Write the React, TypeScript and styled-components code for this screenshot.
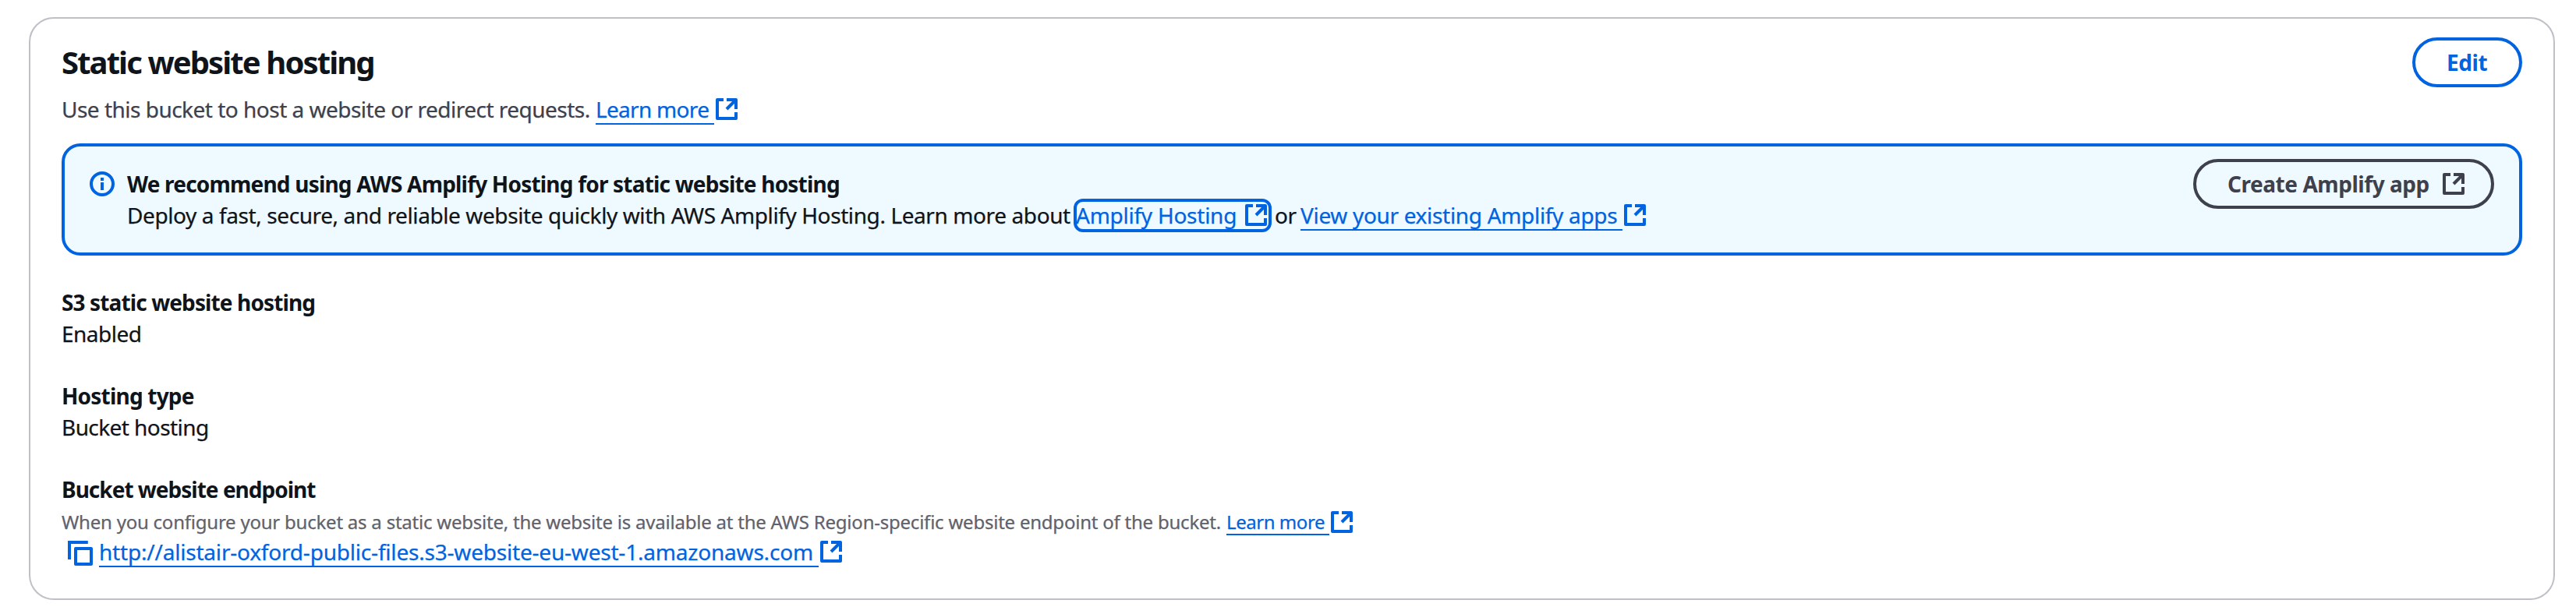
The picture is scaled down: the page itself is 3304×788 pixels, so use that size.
import React from 'react';
import styled, { createGlobalStyle } from 'styled-components';

const color = {
  text: '#0f141a',
  description: '#3e414c',
  hint: '#5f626c',
  action: '#0063e0',
  border: '#bfbfc7',
  infoSurface: '#eefaff',
};

const GlobalStyle = createGlobalStyle`
  *, *::before, *::after { box-sizing: border-box; }
  body {
    margin: 0;
    background: #fff;
    color: ${color.text};
    font-family: 'Noto Sans', 'Open Sans', sans-serif;
    font-size: 28px;
    line-height: 40px;
  }
`;

const Page = styled.main`
  height: 788px;
  padding: 22px 27px 18px 37px;
`;

const Card = styled.section`
  display: flex;
  flex-direction: column;
  height: 748px;
  padding: 24px 40px 0;
  border: 2px solid ${color.border};
  border-radius: 32px;
  background: #fff;
`;

const Header = styled.header`
  display: flex;
  flex: none;
  justify-content: space-between;
  align-items: flex-start;
  height: 136px;
`;

const HeaderText = styled.div`
  padding-top: 8px;
`;

const Title = styled.h2`
  margin: 0 0 16px;
  font-size: 40px;
  line-height: 48px;
  font-weight: 700;
  letter-spacing: -1.9px;
  white-space: nowrap;
`;

const Line = styled.div<{ $tracking?: number; $tone?: string }>`
  display: flex;
  height: 40px;
  white-space: pre;
  letter-spacing: ${(p) => p.$tracking ?? 0}px;
  color: ${(p) => p.$tone ?? color.text};
  -webkit-text-stroke: 0.25px currentColor;
`;

const Label = styled(Line)`
  font-weight: 700;
  -webkit-text-stroke: 0;
`;

const Hint = styled(Line)`
  padding-top: 4px;
  font-size: 24px;
  line-height: 36px;
  color: ${color.hint};
`;

const Run = styled.span<{ $width: number }>`
  flex: none;
  width: ${(p) => p.$width}px;
`;

const Anchor = styled.a<{ $focused?: boolean }>`
  display: flex;
  color: ${color.action};
  text-decoration: none;
  ${(p) =>
    p.$focused &&
    `
    height: 43px;
    margin: -1px 4px 0 4px;
    padding: 1px 4px 0 3px;
    border-radius: 12px;
    box-shadow: inset 0 0 0 4px ${color.action};
  `}
`;

const AnchorText = styled.span<{ $width: number; $tracking: number; $plain?: boolean; $offset?: number }>`
  flex: none;
  width: ${(p) => p.$width}px;
  letter-spacing: ${(p) => p.$tracking}px;
  height: ${(p) => p.$offset ?? 40}px;
  border-bottom: 2px solid ${(p) => (p.$plain ? 'transparent' : color.action)};
`;

const Icon = styled.svg<{ $lift?: number }>`
  flex: none;
  display: block;
  width: 32px;
  height: 32px;
  margin-top: ${(p) => p.$lift ?? 4}px;
  fill: none;
  stroke: currentColor;
  stroke-width: 2;
`;

const Button = styled.button<{ $tone: string; $end: number }>`
  display: flex;
  flex: none;
  align-items: center;
  gap: 16px;
  height: 64px;
  padding: 0 ${(p) => p.$end}px 0 40px;
  border: 4px solid ${(p) => p.$tone};
  border-radius: 40px;
  background: transparent;
  color: ${(p) => p.$tone};
  font: inherit;
  font-weight: 700;
  white-space: nowrap;
`;

const ButtonText = styled.span<{ $width: number; $tracking: number }>`
  width: ${(p) => p.$width}px;
  letter-spacing: ${(p) => p.$tracking}px;
  text-align: left;
`;

const Alert = styled.div`
  display: flex;
  flex: none;
  align-items: flex-start;
  height: 144px;
  padding: 16px 32px;
  border: 4px solid ${color.action};
  border-radius: 24px;
  background: ${color.infoSurface};
`;

const AlertIcon = styled.div`
  padding-top: 12px;
  margin-right: 16px;
  color: ${color.action};
`;

const AlertMessage = styled.div`
  flex: 1;
  padding-top: 12px;
`;

const Details = styled.div`
  display: flex;
  flex-direction: column;
  gap: 40px;
  padding-top: 40px;
`;

const CopyButton = styled.button`
  display: block;
  height: 40px;
  padding: 0 8px;
  border: 0;
  background: none;
  color: ${color.action};
`;

const External = ({ lift }: { lift?: number }) => (
  <Icon $lift={lift} viewBox="0 0 16 16" aria-hidden="true">
    <path d="M6 2H2V14H14V10" strokeLinejoin="round" />
    <path d="M8 2H14V8" strokeLinejoin="round" />
    <path d="M14 2L8 8" />
  </Icon>
);

type LinkProps = {
  children: string;
  width: number;
  tracking: number;
  focused?: boolean;
  lift?: number;
  underline?: number;
};

const ExternalLink = ({ children, width, tracking, focused, lift, underline }: LinkProps) => (
  <Anchor href="#" $focused={focused}>
    <AnchorText $width={width} $tracking={tracking} $plain={focused} $offset={underline}>
      {children}
    </AnchorText>
    <External lift={lift} />
  </Anchor>
);

export default function App() {
  return (
    <>
      <GlobalStyle />
      <Page>
        <Card>
          <Header>
            <HeaderText>
              <Title>Static website hosting</Title>
              <Line $tone={color.description} $tracking={-0.51}>
                <Run $width={685}>Use this bucket to host a website or redirect requests.</Run>
                <ExternalLink width={152} tracking={-0.7}>Learn more</ExternalLink>
              </Line>
            </HeaderText>
            <Button $tone={color.action} $end={40}>
              <ButtonText $width={53} $tracking={-0.4}>Edit</ButtonText>
            </Button>
          </Header>

          <Alert>
            <AlertIcon>
              <Icon $lift={4} viewBox="0 0 16 16" aria-hidden="true">
                <circle cx="8" cy="8" r="7" />
                <path d="M8 12V7M8 6V4" />
              </Icon>
            </AlertIcon>
            <AlertMessage>
              <Label $tracking={-0.8}>We recommend using AWS Amplify Hosting for static website hosting</Label>
              <Line $tracking={-0.4}>
                <Run $width={1210}>
                  Deploy a fast, secure, and reliable website quickly with AWS Amplify Hosting. Learn more about
                </Run>
                <ExternalLink width={215} tracking={-0.25} focused>Amplify Hosting</ExternalLink>
                <Run $width={33}>or</Run>
                <ExternalLink width={413} tracking={-0.32}>View your existing Amplify apps</ExternalLink>
              </Line>
            </AlertMessage>
            <Button $tone={color.description} $end={32}>
              <ButtonText $width={258} $tracking={-0.45}>Create Amplify app</ButtonText>
              <External lift={0} />
            </Button>
          </Alert>

          <Details>
            <div>
              <Label $tracking={-0.88}>S3 static website hosting</Label>
              <Line $tracking={-0.5}>Enabled</Line>
            </div>
            <div>
              <Label $tracking={-0.8}>Hosting type</Label>
              <Line $tracking={-0.57}>Bucket hosting</Line>
            </div>
            <div>
              <Label $tracking={-0.99}>Bucket website endpoint</Label>
              <Hint $tracking={-0.225}>
                <Run $width={1494}>
                  When you configure your bucket as a static website, the website is available at the AWS Region-specific website endpoint of the bucket.
                </Run>
                <ExternalLink width={132} tracking={-0.45} lift={2} underline={35}>Learn more</ExternalLink>
              </Hint>
              <Line>
                <CopyButton aria-label="Copy">
                  <Icon $lift={4} viewBox="0 0 16 16" aria-hidden="true">
                    <path d="M1 12V1H12.9" />
                    <rect x="5" y="5" width="10" height="10" strokeLinejoin="round" />
                  </Icon>
                </CopyButton>
                <ExternalLink width={923} tracking={-0.2}>
                  http://alistair-oxford-public-files.s3-website-eu-west-1.amazonaws.com
                </ExternalLink>
              </Line>
            </div>
          </Details>
        </Card>
      </Page>
    </>
  );
}
